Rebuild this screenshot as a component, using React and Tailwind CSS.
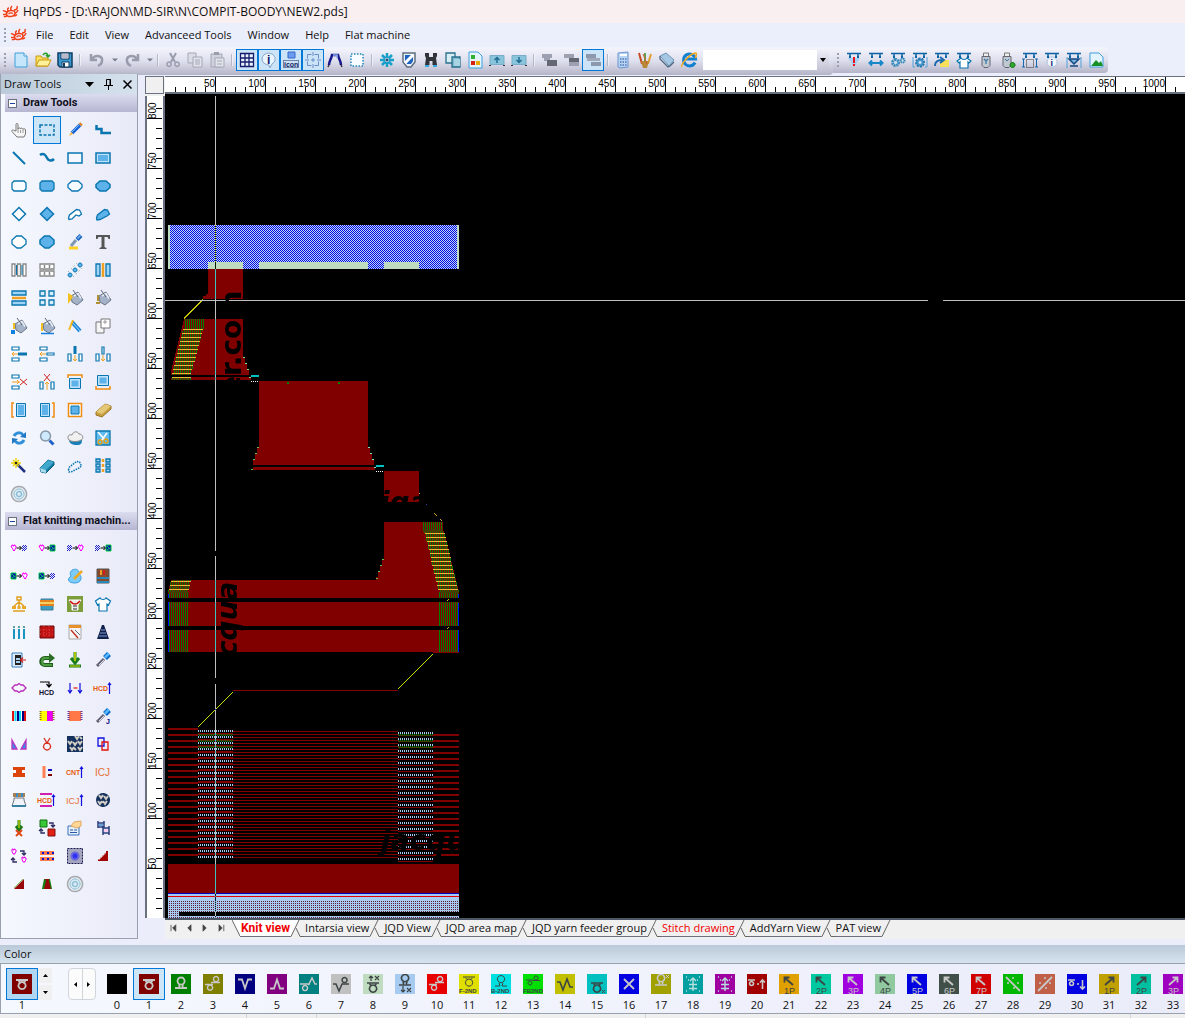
import clsx from "clsx";

const B = "#0a76b0";
const L = "#5db2ea";
const O = "#f0a020";
const N = "#151b6b";
const R = "#a30000";

// Each icon is a list of [path, stroke, fill, strokeWidth, dash] or { t, x, y, c, s } for letters.
const Icon = ({ art, size = "h-4 w-4", box = 16 }) => (
  <svg viewBox={`0 0 ${box} ${box}`} className={clsx(size, "shrink-0 overflow-visible")} aria-hidden="true">
    {art.map((a, i) =>
      a.t ? (
        <text key={i} x={a.x} y={a.y} fill={a.c} fontSize={a.s} fontFamily="Liberation Sans, sans-serif" fontWeight={a.b || 400}>
          {a.t}
        </text>
      ) : (
        <path key={i} d={a[0]} stroke={a[1] || "none"} fill={a[2] || "none"} strokeWidth={a[3] || 1} strokeDasharray={a[4]} />
      )
    )}
  </svg>
);

const bucket = [
  ["M4 6l7-4 5 8-6 5-5-3z", "#6a7486", "#a4b2c8"],
  ["M7 6l4-2.500 3 5", "#e8eef6", null, 1.5],
  ["M6 0l5 7", "#5b6475"],
];
const rail = [["M1 1.5h14M4 1v4M12 1v4", "#0b62a4", null, 1.5], ["M3 4h2v2h-2zM11 4h2v2h-2z", null, "#0b62a4"]];
const heart = (x, c = "#f0f") => [[`M${x} 6h1v-1h1v1h1v-1h1v1h1v2l-1 1v1l-1 1-1-1v-1l-1-1z`, c]];
const hatch = (x) => [[`M${x} 7l2-2M${x} 9l4-4M${x} 11l5-5M${x + 2} 11l3-3`, "#2020c8", null, 1]];
const block = (x) => [[`M${x} 5h5v6h-5z`, "#00d040", "#0000b0"], [`M${x + 1} 6l3 3M${x + 1} 10l3-2`, "#00e060"]];
const smallArrow = [["M5.500 8h5M8.500 6l2 2-2 2", "#000", null, 1]];
const brush = [["M14 2l-4 4", "#0868c8", null, 5.5], ["M14 1.500l-4 4", "#58b8ff", null, 2.5], ["M9 7l-7 7", "#667", null, 3], ["M9 8l-5 5", "#dde", null, 1]];
const target = [
  ["M8 .5a7.500 7.500 0 1 0 .1 0z", "#a4aaae", "#e4eaee", 1.5],
  ["M8 3a5 5 0 1 0 .1 0z", "#8cbcd6", "#dcecf4", 1],
  ["M8 5.500a2.500 2.500 0 1 0 .1 0z", "#8cbcd6", null, 1.5],
];
const recycle = [
  ["M3 6c2-4 7-4 9-1", "#2f8fd8", null, 3],
  ["M13 10c-2 4-7 4-9 1", "#2f8fd8", null, 3],
  ["M15 2v6l-6-1zM1 14V8l6 1z", null, "#1f78c4"],
];
const fabric = [
  ["M0 0h16v16H0z", null, "#14305c"],
  ["M8 0l2 3 2-3M1 5l2 3 2-3M6 6l2 3 2-3M11 5l2 3 2-3M3 11l2 3 2-3M11 11l2 3 2-3", "#d4cfc6", null, 2],
  ["M13 1l2 2M7 12l2 2", "#d4cfc6", null, 2],
];
const sendUp = ["M14.500 14V3M13 5l1.500-2 1.500 2", "#1010e0", null, 1.2];

const drawTools = [
  ["Hand", [["M5 9V2.500c0-1.500 2-1.500 2 0V7c0-1.500 2.500-1.500 2.500 0 0-1.500 2.500-1 2.500.5 0-1 2.500-1 2.500.5v4L13 15H6L1 9.500c-1-1.500 1-2 2-1z", "#777", "#f6f6f6"], ["M7 7v4M9.500 8v3M12 8v3", "#999"]]],
  ["Select", [["M1 3h14v10H1z", B, null, 1.5, "3 1.5"]]],
  ["Pencil", [["M13 3L5 11", "#1462d6", null, 3.5], ["M14.500 1.500l-1.500 1.500", "#e08020", null, 3.5], ["M2 14l2-4 2 2z", null, "#f0b840"], ["M12 3L5 10", "#7ec0ff"]]],
  ["Step line", [["M1.500 3v4h5v4H16", B, null, 2.5]]],
  ["Line", [["M2 2l12 12", B, null, 2]]],
  ["Curve", [["M1 5c4-3 6 1 7 3s4 4 7 1", B, null, 2.5]]],
  ["Rectangle", [["M1 3h14v10H1z", B, "#f4f8fe", 1.5]]],
  ["Filled rectangle", [["M1 3h14v10H1z", B, "#bfe2fa", 1.5], ["M3 5h10v6H3z", null, L]]],
  ["Round rectangle", [["M3 3h10l2 2v6l-2 2H3l-2-2V5z", B, "#f8fbff", 1.3]]],
  ["Filled round rectangle", [["M3 3h10l2 2v6l-2 2H3l-2-2V5z", B, L, 1.3]]],
  ["Ellipse", [["M5 3h6l4 3.500v3L11 13H5L1 9.500v-3z", B, "#f8fbff", 1.3]]],
  ["Filled ellipse", [["M5 3h6l4 3.500v3L11 13H5L1 9.500v-3z", B, L, 1.5]]],
  ["Diamond", [["M8 1.500l6.500 6.500L8 14.500 1.500 8z", B, "#fff", 1.5]]],
  ["Filled diamond", [["M8 1.500l6.500 6.500L8 14.500 1.500 8z", B, L, 1.5]]],
  ["Polygon", [["M1.500 12l1-3 7-5.500 3 .5 2 4-2.500 2-3-1-4 4-3 .5z", B, "#fff", 1.3]]],
  ["Filled polygon", [["M1.500 12l1-3 7-5.500 3 .5 2 4-2.500 2-7 3.500-3 .5z", B, L, 1.3]]],
  ["Freeform", [["M5.500 2h5L15 6v4l-5 4H6L1 10V6z", B, "#fff", 1.3]]],
  ["Filled freeform", [["M5.500 2h5L15 6v4l-5 4H6L1 10V6z", B, L, 1.5]]],
  ["Color picker", [["M2 14h9", "#ffd020", null, 3], ["M14 1.500l-4 4", "#1560c0", null, 4], ["M13.500 1.500l-3 3", "#7cb8f0", null, 1.5], ["M9 6l-5 6", "#8098b0", null, 3]]],
  ["Text", [["M1 1h14v4h-1.500l-1-2H9.500v10l2 1v1h-7v-1l2-1V3h-3l-1 2H1z", null, "#555"]]],
  ["Columns", [["M1 2h3v12H1zM6.500 2h3v12h-3zM12 2h3v12h-3z", "#888", "#fff", 1.3], ["M5.500 3v10M11 3v10", B, null, 1]]],
  ["Blocks", [["M1 2h14v5H1zM1 9h14v5H1z", "#888", "#fff", 1.3], ["M5.500 3v3M10.500 3v3M5.500 10v3M10.500 10v3", "#888", null, 1.5]]],
  ["Chain", [["M1 10l9-9M6 15l9-9", "#888", null, 1, "1 3"], ["M13 1a2 2 0 1 0 .1 0zM8 6a2 2 0 1 0 .1 0zM3 11a2 2 0 1 0 .1 0z", B, L, 1]]],
  ["Mirror vertical", [["M1 2h4v12H1zM11 2h4v12h-4z", B, "#9fd4f5", 1.3], ["M8 1v14", O, null, 2.5]]],
  ["Mirror horizontal", [["M1 1h14v4H1zM1 11h14v4H1z", B, "#9fd4f5", 1.3], ["M1 8h14", O, null, 2.5]]],
  ["Array", [["M1 1h5v5H1zM10 1h5v5h-5zM1 10h5v5H1zM10 10h5v5h-5z", B, "#d8eefb", 1.3]]],
  ["Fill", [...bucket, ["M1 3v11l3-4 2-4z", null, "#f4c020"]]],
  ["Fill border", [...bucket, ["M3 5v6M1 13h4", "#b09030", null, 2]]],
  ["Fill left", [...bucket, ["M3 5v6", "#f4c020", null, 2], ["M0 12h4v4H0z", null, "#1080e0"]]],
  ["Fill line", [...bucket, ["M3 5v8", "#f4c020", null, 2], ["M2 15.500h13", "#1080e0", null, 1.5]]],
  ["Marker", [["M5 4l8 9", "#1c86d8", null, 4], ["M6 5l7 8", "#9cd4ff", null, 1], ["M2 12l4-10", "#f4b820", null, 2]]],
  ["Copy shape", [["M1 4h8v11H1z", "#777", "#f4f4f4"], ["M6 1h9v9H6z", "#777", "#fff"], ["M10 2v4M8 4h4", "#999"]]],
  ["Insert row", [["M1 1h7v3H1zM1 12h7v3H1z", B, "#fff", 1.2], ["M7 8h9", B, null, 3], ["M1 8h6M3 6L1 8l2 2", O, null, 1]]],
  ["Insert empty row", [["M1 1h7v3H1zM1 12h7v3H1zM8 7h7v2H8z", B, "#fff", 1.2], ["M1 8h6M3 6L1 8l2 2", O]]],
  ["Insert column", [["M1 8h3v7H1zM12 8h3v7h-3z", B, "#fff", 1.2], ["M8 0v8", B, null, 3], ["M8 9v6M6 13l2 2 2-2", O]]],
  ["Insert empty column", [["M1 8h3v7H1zM12 8h3v7h-3zM7 1h2v7H7z", B, "#fff", 1.2], ["M8 9v6M6 13l2 2 2-2", O]]],
  ["Delete row", [["M1 1h7v3H1zM1 12h7v3H1z", B, "#fff", 1.2], ["M1 8h8M6 6l2 2-2 2", O], ["M9 5l7 6M9 11l7-6", "#d02020"]]],
  ["Delete column", [["M1 8h3v7H1zM12 8h3v7h-3z", B, "#fff", 1.2], ["M8 8v8M6 10l2-2 2 2", O], ["M5 0l6 7M11 0L5 7", "#d02020"]]],
  ["Align top", [["M1 4V1h14v3", "#f08c10", null, 1.5], ["M2.500 4.500h11v10h-11z", B, "#bfe2fa"], ["M4.500 6.500h7v6h-7z", null, L]]],
  ["Align bottom", [["M1 12v3h14v-3", "#f08c10", null, 1.5], ["M2.500 1.500h11v10h-11z", B, "#bfe2fa"], ["M4.500 3.500h7v6h-7z", null, L]]],
  ["Align left", [["M3 1H1v14h2", "#f08c10", null, 1.5], ["M5.500 1.500h9v13h-9z", B, "#bfe2fa"], ["M7 3h6v10H7z", null, L]]],
  ["Align right", [["M13 1h2v14h-2", "#f08c10", null, 1.5], ["M1.500 1.500h9v13h-9z", B, "#bfe2fa"], ["M3 3h6v10H3z", null, L]]],
  ["Frame", [["M1.500 1.500h13v13h-13z", "#f08c10", "#fff", 1.5], ["M4 4h8v8H4z", B, L]]],
  ["Eraser", [["M1 10l9-8 6 2v3l-9 8-6-2z", "#9a7420", "#c8a040"], ["M1 10l9-8 6 2-9 8z", null, "#e4c878"]]],
  ["Rotate", recycle],
  ["Zoom", [["M6.500 1a5 5 0 1 0 .1 0z", "#8898a8", "#cfeaff", 1.5], ["M10.500 10.500l4 4", "#2060c8", null, 3]]],
  ["Cloud", [["M2 10c0 3 3 5 8 5 4 0 5-2 5-5z", null, "#1880b8"], ["M2 10c-3-4 1-6 3-5 1-4 6-4 7-1 4 0 5 5 2 6-3 2-9 2-12 0z", "#888", "#f0f0f0"]]],
  ["Cut area", [["M1 1h14v14H1z", B, "#62bcf0", 1.3], ["M3 2l7 8M12 3l-6 8", "#fff", null, 1.5], ["M5 10a2 2 0 1 0 .1 0zM11 9a2 2 0 1 0 .1 0z", "#e8a010", null, 1.5]]],
  ["Magic wand", [["M5 5l9 9", "#203080", null, 2.5], ["M5 0v10M0 5h10M2 2l6 6M8 2L2 8", "#e8d000", null, 1.3], ["M4 4h2v2H4z", null, "#222"]]],
  ["Rubber", [["M1 10l8-8 6 2v3l-8 8-5-1z", "#0a5a80", "#157ca4"], ["M1 10l8-8 6 2-8 8z", null, "#40a8cc"], ["M1 10l6 2v3l-5-1z", null, "#a8dcec"]]],
  ["Lasso", [["M1.500 12l1-3 7-5.500 3 .5 2 4-2.500 2-7 3.500-3 .5z", B, null, 1.5, "1.5 1"]]],
  ["Pattern grid", [["M1 1h4v3H1zM1 6h4v3H1zM1 11h4v3H1zM11 1h4v3h-4zM11 6h4v3h-4zM11 11h4v3h-4z", B, "#9fd4f5", 1.3], ["M8 1v14", O, null, 2.5, "3 2"]]],
  ["Target", target],
];

const machineTools = [
  ["Heart to hatch", [...heart(0), ...smallArrow, ...hatch(11)]],
  ["Heart to block", [...heart(0), ...smallArrow, ...block(11)]],
  ["Hatch to heart", [...hatch(0), ...smallArrow, ...heart(11)]],
  ["Hatch to block", [...hatch(0), ...smallArrow, ...block(11)]],
  ["Block to heart", [...block(0), ...smallArrow, ...heart(11)]],
  ["Block to hatch", [...block(0), ...smallArrow, ...hatch(11)]],
  ["Edit yarn", [["M4 8c-4-7 9-10 8-2 4 3 2 9-4 9S-1 12 4 8z", "#3a9fe0", "#7ccbfa"], ["M15 3l-8 8", "#f0a820", null, 2.5]]],
  ["Cabinet", [["M2 1h12v14H2z", "#555", "#8a4a2c"], ["M2 9h12v2H2zM2 13h12v2H2z", null, "#2a88b8"], ["M6 2v5", "#f0a020", null, 2], ["M9 2v5", "#d02020", null, 2]]],
  ["Balance", [["M6 1h4v3H6zM2 15h12M8 4v2M3 10l5-4 5 4M8 6v6", "#e0a020", null, 1.5], ["M1 10h4v3H1zM11 10h4v3h-4zM6.500 10h3v3h-3z", null, "#e8a828"]]],
  ["Spool", [["M2 3h12v11H2z", "#3c7c98", "#3c9cc0"], ["M1 5h14M1 9h14", "#e88020", null, 2], ["M1 7h14", "#f4d060", null, 2]]],
  ["Sweater", [["M0 0h16v16H0z", null, "#7d9c3a"], ["M2 4h12l-3 5v5H5V9z", "#fff", "#e8e8e8", 1], ["M3 5c3 4 7 4 10 0", "#d01010", null, 1.5], ["M6 10h4M6 13h4", "#333"]]],
  ["Shirt", [["M5 2c1 2 5 2 6 0l4.500 3-2 4-1.500-1v7H4V8L2.500 9l-2-4z", B, "#fff", 1.2]]],
  ["Needles", [["M3 5v10M8 5v10M13 5v10", "#1b94c4", null, 2], ["M3 2v2M8 2v2M13 2v2", "#5aa0a8", null, 2]]],
  ["Carpet", [["M1 2h14v12H1z", "#6a0808", "#c01414"], ["M1 6h14M1 10h14M5 2v12M10 2v12", "#e04040", null, 1, "1 2"]]],
  ["Notes", [["M2 1h12v14H2z", "#aaa", "#f4f4f4"], ["M2 1h12v3H2z", null, "#e8902c"], ["M4 6l7 8", "#c03020", null, 1.3], ["M8 6l5 5", "#607080"]]],
  ["Cone", [["M7 1h2l5 14H2z", null, "#10204c"], ["M6 6h4M5 9h6M4 12h8", "#8098d0"]]],
  ["Import", [["M1 1h10v14H1z", "#3b7fc0", "#d8ecfb"], ["M4 3h6v10H4z", null, "#222"], ["M5 6h4v2H5zM5 9h4v2H5z", null, "#a8d0f0"], ["M15 8h-5M12 5.500L9.500 8l2.500 2.500", "#d02020", null, 1.2]]],
  ["Redo knit", [["M14 13H6c-5 0-5-7 0-7h5", "#225c1c", null, 4], ["M13 13H6c-4 0-4-7 0-7h5", "#4c9c40", null, 2], ["M10 1l6 5-6 5z", null, "#2c6c24"]]],
  ["Download", [["M8 0v9M4 6l4 5 4-5", "#1c7c1c", null, 3], ["M8 0v9", "#d8e000", null, 1.5], ["M2 14h12", "#1c7c1c", null, 3], ["M3 14h10", "#d8e000"]]],
  ["Brush", brush],
  ["Lozenge", [["M1 8l3-3h2l2-1.500L10 5h2l3 3-3 3h-2l-2 1.500L6 11H4z", "#b82cb8", null, 1.3]]],
  ["Send HCD", [["M1 2h9v4M7.500 4l2.500 3 2.500-3", "#000", null, 1.2], { t: "HCD", x: 0, y: 15, c: "#101030", s: 7, b: 700 }]],
  ["Spacing", [["M3 3v10M1 10l2 3 2-3M13 3v10M11 10l2 3 2-3", "#1010e0", null, 1.2], ["M6.500 8h4", "#e01010", null, 1.2]]],
  ["Send HCD up", [{ t: "HCD", x: -2, y: 11, c: "#e85c10", s: 7, b: 700 }, sendUp]],
  ["Stripes", [["M2 3v10M14 3v10", "#e01010", null, 2], ["M4.500 3v10M9 3v10", "#00d8f0", null, 2], ["M7 3v10M12 3v10", "#000080", null, 2]]],
  ["Two colors", [["M1 3h7v10H1z", null, "#ffff00"], ["M8 3h6v10H8z", null, "#f000f0"], ["M1.500 3v10M14.500 3v10", "#907020", null, 2, "1 1"]]],
  ["One color", [["M2 3h12v10H2z", null, "#ff7848"], ["M1.500 3v10M14.500 3v10", "#6030a0", null, 2, "1 1"]]],
  ["Brush J", [...brush, { t: "J", x: 11, y: 16, c: "#000080", s: 7, b: 700 }]],
  ["Split", [["M1 4l5 9H1zM15 4l-5 9h5z", "#c030c0", "#3090e8", 1.3]]],
  ["Loop", [["M5 2l3 5 3-5M8 7a3.500 3.500 0 1 0 .1 0z", "#d83020", null, 1.3]]],
  ["Fabric", fabric],
  ["Overlap", [["M3 2h6v8H3z", "#1010e0", null, 1.3], ["M7 6h6v8H7z", "#e01010", null, 1.3]]],
  ["Beam", [["M2 3h12v3h-3v3h3v4H2V9h3V6H2z", null, "#dc4408"]]],
  ["Levels", [["M5 2v12", "#ff8050", null, 3], ["M9 6h4", "#1010c0", null, 2], ["M9 11h4", "#800000", null, 2]]],
  ["Send CNT", [{ t: "CNT", x: -1, y: 11, c: "#e85c10", s: 7, b: 700 }, sendUp]],
  ["ICJ", [{ t: "ICJ", x: 0, y: 12, c: "#e87030", s: 10 }]],
  ["Machine bed", [["M2 1h12v4H2z", null, "#a88050"], ["M5 1h2v4H5zM10 1h2v4h-2z", null, "#3a8cc8"], ["M3 6h10v2l2 6H1l2-6z", "#707880", "#f0f4f8"], ["M1 14h14", "#3a80a0", null, 2]]],
  ["HCD bars", [["M1 2h12M1 14h12", "#d020b0", null, 2], { t: "HCD", x: -2, y: 11, c: "#e85c10", s: 7, b: 700 }, sendUp]],
  ["Send ICJ", [{ t: "ICJ", x: -1, y: 12, c: "#e87030", s: 9 }, sendUp]],
  ["Round fabric", [["M8 1a7 7 0 1 0 .1 0z", null, "#14305c"], ["M4 3l2 3 2-3M9 4l2 3 2-3M3 9l2 3 2-3M8 9l2 3 2-3", "#d4cfc6", null, 2]]],
  ["Cancel download", [["M8 0v9M5 6l3 4 3-4", "#1c7c1c", null, 3], ["M8 0v8", "#d8e000", null, 1.2], ["M5 10l6 6M11 10l-6 6", "#e04818", null, 2]]],
  ["Swap", [["M1 0h7v7H1z", "#107010", "#38c838"], ["M9 9h7v7H9z", "#801010", "#e02010"], ["M10 3h4v4M12 5l2 2 2-2M6 13H2V9M0 11l2-2 2 2", "#2c2c60", null, 1.3]]],
  ["Properties", [["M1 6h11v9H1z", "#3a70b8", "#e4f0fc"], ["M3 10h3M3 12.500h7M7 10h3", "#2858a8"], ["M4 6l3-4 7-1v5l-4 2-3-1z", "#e0a860", "#ffd898"]]],
  ["Ladder", [["M3 1v7M9 1v7M3 3h6M3 7h6", "#284080", null, 1.5], ["M4 4h4v2H4z", null, "#68a0d8"], ["M8 6v9M14 6v9M8 8h6M8 13h6", "#284080", null, 1.5], ["M9 9h4v3H9z", null, "#f8d0f0"]]],
  ["Swap hearts", [["M1 1h1v1h1V1h1v1h1v2L4 5v1H2V5L1 4zM11 9h1v1h1V9h1v1h1v2l-1 1v1h-2v-1l-1-1z", "#f000f0"], ["M9 3h4v3M11 5l2 2 2-2M6 14H2v-4M0 12l2-2 2 2", "#2c2c60", null, 1.3]]],
  ["Bands", [["M1 5h14M1 11h14", "#ff7c50", null, 4], ["M3 5h12M3 11h12", "#1010c8", null, 2, "2 3"]]],
  ["Blur area", [["M.5.5h15v15H.5z", "#181850", "#a4a4bc", 1, "2 1"], ["M8 3.500a4.500 4.500 0 1 0 .1 0z", null, "#6868e0"], ["M8 5.500a2.500 2.500 0 1 0 .1 0z", null, "#3030f0"]]],
  ["Stairs", [["M3 13h10V3h-2v2H9v2H7v2H5v2H3z", null, R], ["M3 11h2V9h2V7h2V5h2", "#e8e8f0"]]],
  ["Ramp", [["M3 13h10V3z", null, "#980808"], ["M3 12L12 3", "#80c860"]]],
  ["Trapezoid", [["M5 3h6l2 10H3z", null, "#108010"], ["M6 3h4v2l2 8H5l2-8z", null, "#980808"]]],
  ["Machine target", target],
];

const toolIcons = {
  newFile: [["M2 1h9l3 3v11H2z", "#3fa0dc", "#c6e6fb"], ["M11 1v3h3", "#3fa0dc", "#fff"]],
  open: [["M1 4h5l1 2h6v8H1z", "#c89810", "#fce060"], ["M4 8h12l-3 6H1z", "#c89810", "#fff09a"], ["M8 3c2-3 5-2 5 1M11 3l2 2 2-2", "#28a028", null, 1.5]],
  save: [["M1 1h14v14H3l-2-2z", "#103c60", "#3a98d0", 1.5], ["M4 1h8v6H4z", "#103c60", "#fff"], ["M5 10h7v5H5z", "#103c60", "#fff"], ["M6 11h2v4H6z", null, "#103c60"], ["M5 3h6M5 5h6", "#779"]],
  undo: [["M2 2v6h6M3 7c4-5 11-3 10 2 0 2-2 4-4 5", "#989cac", null, 2.5]],
  redo: [["M14 2v6H8M13 7C9 2 2 4 3 9c0 2 2 4 4 5", "#989cac", null, 2.5]],
  drop: [["M4 6h8l-4 4z", null, "#777c8c"]],
  cut: [["M5 1l5 9M11 1l-5 9", "#989cac", null, 2], ["M4 10a2.200 2.200 0 1 0 .1 0zM12 10a2.200 2.200 0 1 0 .1 0z", "#989cac", null, 1.5]],
  copy: [["M1 1h8v10H1z", "#a4a8b6", "#dadce6"], ["M6 5h9v10H6z", "#a4a8b6", "#e2e4ec"], ["M8 8h5M8 10h5M8 12h5", "#a4a8b6"]],
  paste: [["M2 2h11v13H2z", "#a4a8b6", "#cfd1dc"], ["M5 0h5v3H5z", null, "#9a9eac"], ["M6 6h9v9H6z", "#a4a8b6", "#e2e4ec"], ["M8 9h5M8 12h5", "#a4a8b6"]],
  grid: [["M1.500 1.500h13v13h-13zM1.500 6h13M1.500 10h13M6 1.500v13M10 1.500v13", N, "#eaf4ff", 1.3]],
  info: [["M8 1a7 6 0 1 0 0 12l1 3 2-4a7 6 0 0 0-3-11z", "#88a8c8", "#e8f4ff"], { t: "i", x: 6, y: 12, c: "#102070", s: 12, b: 700 }],
  iconBtn: [["M5 0h7v6H5z", "#3868c8", "#6c9cf0"], ["M0.500 8.500h15v7h-15z", "#102060", null, 1, "1 1"], { t: "icon", x: 1, y: 14.5, c: "#102060", s: 7, b: 700 }],
  cross: [["M2.500 6.500v-4h4M9.500 2.500h4v4M13.500 9.500v4h-4M6.500 13.500h-4v-4M8 0v4M8 12v4M0 8h4M12 8h4M8 6v4M6 8h4", "#6c8cc8"]],
  compass: [["M2 13c0-4 2-5 3-10h6c1 5 3 6 3 10", "#18188c", null, 2.5], ["M6 3h4v3", "#8cacf0", null, 1.5], ["M2 13l-1 2M14 13l1 2", "#333", null, 1.5]],
  dash: [["M2 2h12v12H2z", "#2088b8", "#f8fcff", 1.5, "1.5 1.5"]],
  snow: [["M8 1v5M8 10v5M1 8h5M10 8h5M3 3l3.500 3.500M13 3L9.500 6.500M3 13l3.500-3.500M13 13L9.500 9.500", "#18a0c8", null, 2.5], ["M8 6.500v3M6.500 8h3", "#104870", null, 1.3]],
  shield: [["M2 1h12v9l-4 5H6l-4-5z", "#607080", "#e8f0f8", 1.5], ["M4 3h8v6l-2 3H6l-2-3z", null, "#1c60c0"], ["M4 11l8-8", "#fff", null, 3]],
  binocular: [["M2 1h4v4h4V1h4v3l-1 2 1 7H9.500V9h-3v4H2l1-7-1-2z", null, "#303438"], ["M2 14h4M10 14h4", "#38a8e0", null, 2]],
  windows: [["M1 1h9v10H1z", "#28708c", "#d8ecf4", 1.3], ["M7 5h8v10H7z", "#28708c", "#80b8cc", 1.3], ["M9 7h6v7H9z", null, "#a8d4e4"]],
  palette: [["M2 0h9l4 4v12H2z", "#3fa0dc", "#e4f4fe"], ["M4 3h4v4H4z", null, "#30b030"], ["M4 9h4v4H4z", null, "#d82010"], ["M9 9h4v4H9z", null, "#e8a800"]],
  up: [["M1 3.500h14v9H1z", "#78acc8", "#88c4dc"], ["M8 11V5.500M5.500 8L8 5.500 10.500 8", "#206c94", null, 1.5], ["M0 13.500h2M14 13.500h2", "#333"]],
  down: [["M1 3.500h14v9H1z", "#78acc8", "#88c4dc"], ["M8 5v5.500M5.500 8L8 10.500 10.500 8", "#206c94", null, 1.5], ["M0 13.500h2M14 13.500h2", "#333"]],
  layer1: [["M1 2h10v4H1zM3 6h6v3H3z", null, "#9ca0b0"], ["M6 8h10v6H6z", null, "#646874"]],
  layer2: [["M1 2h10v4H1zM6 10h10v4H6z", null, "#9ca0b0"], ["M6 6h10v4H6z", null, "#646874"]],
  layer3: [["M1 2h10v4H1zM6 10h10v4H6z", null, "#8c98ac"], ["M2 6h13v3H2z", null, "#a0a8b8"]],
  calc: [["M3 1l10-1v15l-8 1-2-1z", "#6c94d0", "#b8d4f4"], ["M5 3h7", "#fff", null, 2], ["M5 7h7M5 10h7M5 13h7", "#5078b8", null, 1.5, "1.5 1"]],
  pens: [["M5 12L2 1", "#c84820", null, 2], ["M8 12V1", "#60a050", null, 2], ["M11 12l3-10", "#e0a030", null, 2], ["M4 9h8l-2 7H6z", null, "#b88838"], ["M6 2l4 10", "#d06030"]],
  card: [["M1 4l6-3 8 7-5 6z", "#6c94b8", "#a4c8e4"], ["M1 4v3l8 8 2-1 4-4", "#506880", null, 1.3]],
  ie: [["M14 10.500a6 6 0 1 1 .5-3.500H5", "#1480d0", null, 3], ["M1 15c-2-2 8-14 14-14 1 1 0 4-1 5", "#f0a820", null, 1.5]],
};

const railIcons = [
  ["Warning", [...rail, ["M2 6h12L8 15z", null, "#a8d0f4"], ["M8 5v6M8 12v2", "#f01020", null, 2]]],
  ["Width", [...rail, ["M2 11h12M4 8.500L1.500 11 4 13.500M12 8.500l2.500 2.500-2.500 2.500", "#1888c8", null, 2]]],
  ["Gears", [...rail, ["M5.500 7.500a3 3 0 1 0 .1 0z", "#3888b8", "#cfe4f4", 3, "1.8 .6"], ["M12.500 6.500a2 2 0 1 0 .1 0z", "#3888b8", "#cfe4f4", 2, "1.5 .5"]]],
  ["Gear frame", [...rail, ["M8 6.500a4 4 0 1 0 .1 0z", "#2878b0", "#4898cc", 2, "2 1"], ["M8 9a1.500 1.500 0 1 0 .1 0z", null, "#cfe4f4"], ["M1 5v10h2M15 5v10h-2", "#50a0d8"]]],
  ["Export", [...rail, ["M6 8h9v7H6z", null, "#f8e058"], ["M1 14c0-5 4-6 7-6M6 5l4 3-4 3", "#1868b0", null, 1.8]]],
  ["Garment", [...rail, ["M5 6c1 2 5 2 6 0l4 3-2 2-1-1v6H4v-6l-1 1-2-2z", B, "#fff", 1.2]]],
  ["USB", [["M5.500 1h5v4h-5z", "#777", "#eee"], ["M4 4.500h8v9l-2 2H6l-2-2z", "#667", "#c0c8d0"], ["M6 7l2 2 2-2M8 9v3", "#3878a8", null, 1.2]]],
  ["USB ready", [["M4.500 1h5v4h-5z", "#777", "#eee"], ["M3 4.500h8v9l-2 2H5l-2-2z", "#667", "#c0c8d0"], ["M5 7l2 2 2-2", "#3878a8"], ["M12.500 10.500a2.500 2.500 0 1 0 .1 0z", "#107010", "#30a830"]]],
  ["Range", [...rail, ["M4.500 7.500h7v8h-7z", "#333", null, 1, "1 1"], ["M1.500 7v8M14.500 7v8M0 7h3M13 7h3M0 15h3M13 15h3", "#1868b0"]]],
  ["Details", [...rail, ["M8 5a5 5 0 1 0 .1 0z", "#a8c0dc", "#f0f6ff"], { t: "i", x: 6.5, y: 14, c: "#102070", s: 9, b: 700 }]],
  ["Funnel", [...rail, ["M1 5v11M15 5v11", "#50a0d8"], ["M3 7h10L8 12zM4 14h8", "#104880", "#80b0e0", 1.5]]],
  ["Landscape", [["M2 1h9l4 4v10H2z", "#3fa0dc", "#e4f4fe"], ["M3 14l5-6 3 3 2-2 2 5z", null, "#189028"]]],
];

const LG = "#c8c8c8";
const DK = "#3c4444";
const loopDown = (x, y, c, w = 1.6) => [
  [`M${x - 6} ${y - 5}h12M${x - 3.5} ${y - 4}l2.500 2M${x + 3.5} ${y - 4}l-2.500 2`, c, null, w],
  [`M${x} ${y - 3}a3.600 3.600 0 1 0 .1 0z`, c, null, w],
];
const loopUp = (x, y, c, w = 1.6) => [
  [`M${x - 6} ${y + 6}h5l-1-3M${x + 6} ${y + 6}h-5l1-3`, c, null, w],
  [`M${x} ${y - 4.500}a3.600 3.600 0 1 0 .1 0z`, c, null, w],
];
const miniLoops = (c) => [
  ["M13 2.500a2.600 2.600 0 1 0 .1 0zM7 11a2.600 2.600 0 1 0 .1 0z", c, null, 1.4],
  ["M2 10.500h8M8 8.500h9", c, null, 1.4],
];
const caption = (t, c) => [{ t, x: 0, y: 19, c, s: 6, b: 700 }];
const diagLeft = (n, c) => [["M14 11L6 4M5.500 8.500V3.500h5", c, null, 1.8], { t: `${n}P`, x: 5, y: 19.5, c, s: 9 }];
const diagRight = (n, c) => [["M6 11l8-7M9.500 3.500h5v5", c, null, 1.8], { t: `${n}P`, x: 5, y: 19.5, c, s: 9 }];
const starArrow = [["M10 4v13M7 7l3-3 3 3M6 10.500h8M6 14.500h8", "#b8e0e0", null, 1.4], ["M3 3h1M16 3h1M3 17h1M16 17h1M5 6h1M14 6h1", "#b8e0e0", null, 1.4]];
const crossDots = [["M4 9h2M14 9h2M9 4h2M10 14h2", LG, null, 1.5]];

const swatches = [
  ["bg-black", []],
  ["bg-[#800000]", loopDown(10, 11, LG, 1.8)],
  ["bg-[#008000]", loopUp(10, 8, LG, 1.8)],
  ["bg-[#808000]", miniLoops(LG)],
  ["bg-[#000080]", [["M3 5.500h4l3 9 3-9h4", LG, null, 1.8]]],
  ["bg-[#800080]", [["M3 14.500h4l3-9 3 9h4", LG, null, 1.8]]],
  ["bg-[#008080]", [["M9 11l1-1 3-6 3 6h2M1 10h10", LG, null, 1.5], ["M6 11.500a2.500 2.500 0 1 0 .1 0z", LG, null, 1.5]]],
  ["bg-[#c0c0c0]", [["M2 10h3l3 7 3-7h7", DK, null, 1.5], ["M13.500 3.500a2.500 2.500 0 1 0 .1 0z", DK, null, 1.5]]],
  ["bg-[#c0dcc0]", [...loopDown(10, 14, DK), ["M8 7V2M6 4l2-2 2 2M12 2l4 4M16 2l-4 4", DK, null, 1.2]]],
  ["bg-[#a6caf0]", [...loopUp(10, 5, DK), ["M8 12v6M6 16l2 2 2-2M12 14l4 4M16 14l-4 4", DK, null, 1.2]]],
  ["bg-[#e80000]", miniLoops(LG)],
  ["bg-[#e0e000]", [...loopDown(10, 8, DK, 1), ...caption("F-2ND", DK)]],
  ["bg-[#00e0e0]", [...loopUp(10, 6, DK, 1), ...caption("B-2ND", DK)]],
  ["bg-[#00e000]", [["M13 2a2 2 0 1 0 .1 0zM7 7a2 2 0 1 0 .1 0zM3 6h7M10 6.500h7", DK, null, 1], ...caption("FB2ND", DK)]],
  ["bg-[#c0c000]", [["M2 8h3l3 8 4-11 3 8h3", DK, null, 1.6]]],
  ["bg-[#00c0c0]", [...loopDown(10, 14, DK), ["M15 16l3 3M18 16l-3 3", DK]]],
  ["bg-[#0000e0]", [["M5 5l10 10M15 5L5 15", LG, null, 1.8]]],
  ["bg-[#a0a000]", [...loopUp(10, 5, LG), ["M15 1l3 3M18 1l-3 3", LG]]],
  ["bg-[#00a0a0]", starArrow],
  ["bg-[#a000a0]", starArrow],
  ["bg-[#a00000]", [["M1 6h7M4.500 7.500a2 2 0 1 0 .1 0zM10 10h2M15.500 15V6M13 8.500L15.500 6 18 8.500", LG, null, 1.6]]],
  ["bg-[#e0a000]", diagLeft(1, DK)],
  ["bg-[#00c8a0]", diagLeft(2, DK)],
  ["bg-[#a000e0]", diagLeft(3, LG)],
  ["bg-[#90c8a0]", diagLeft(4, DK)],
  ["bg-[#0000e0]", diagLeft(5, LG)],
  ["bg-[#405048]", diagLeft(6, LG)],
  ["bg-[#d00000]", diagLeft(7, LG)],
  ["bg-[#00b800]", [["M3 3l14 14", LG, null, 1.8], ...crossDots]],
  ["bg-[#c06048]", [["M17 3L3 17", LG, null, 1.8], ...crossDots]],
  ["bg-[#0000e0]", [["M1 6h7M4.500 7.500a2 2 0 1 0 .1 0zM10 10h2M15.500 6v9M13 12.500l2.500 2.500 2.500-2.500", LG, null, 1.6]]],
  ["bg-[#c0a000]", diagRight(1, DK)],
  ["bg-[#00c0a0]", diagRight(2, DK)],
  ["bg-[#a000c0]", diagRight(3, LG)],
];

const menus = ["File", "Edit", "View", "Advanceed Tools", "Window", "Help", "Flat machine"];

const views = ["Knit view", "Intarsia view", "JQD View", "JQD area map", "JQD yarn feeder group", "Stitch drawing", "AddYarn View", "PAT view"];

const Logo = () => (
  <Icon
    art={[
      ["M4.500 10c0-4 8.500-5 8.500-1s-8.500 5-8.500 1z", "#f04018", null, 1.6],
      ["M6.500 10c2-2 3-1.500 4.500-.5", "#f04018", null, 1.3],
      ["M5 8C3 8 2 6 1 7M4 10.500H1M5 12c-1 1-2 0-3 1M12 6c2 0 4-1 3-4M13 9c2 0 2-1 3-3M12 11.500c1 1 2 0 3-1M9 6c-1-2 0-3 1-4M6 7C5 5 6 4 7 4", "#f04018", null, 1.5],
    ]}
  />
);

const Grip = () => (
  <span className="mx-1 flex shrink-0 flex-col gap-0.5">
    {[0, 1, 2, 3].map((i) => (
      <i key={i} className="h-0.5 w-0.5 bg-gray-400" />
    ))}
  </span>
);

const Tool = ({ name, art, active, wide }) => (
  <button
    type="button"
    aria-label={name}
    className={clsx(
      "flex h-[22px] shrink-0 items-center justify-center border",
      wide ? "w-[26px]" : "w-[22px]",
      active ? "border-[#0078d7] bg-[#cce4f7]" : "border-transparent"
    )}
  >
    <Icon art={art} />
  </button>
);

const Drop = ({ name }) => (
  <button type="button" aria-label={name} className="flex w-[9px] shrink-0 justify-center">
    <Icon art={toolIcons.drop} size="h-3 w-3" />
  </button>
);

const Sep = () => <span className="mx-[3px] h-3 w-0.5 shrink-0 border-l border-gray-400/70 bg-white/50" />;

const MainToolbar = () => {
  const t = toolIcons;
  return (
    <div className="flex h-7 shrink-0 items-center rounded-r bg-linear-to-b from-[#f4f5fc] via-[#dfe0ee] to-[#b4b4c8] pr-1 pb-0.5">
      <Grip />
      <Tool name="New" art={t.newFile} />
      <Tool name="Open" art={t.open} />
      <Tool name="Save" art={t.save} />
      <Sep />
      <Tool name="Undo" art={t.undo} wide />
      <Drop name="Undo list" />
      <Tool name="Redo" art={t.redo} wide />
      <Drop name="Redo list" />
      <Sep />
      <Tool name="Cut" art={t.cut} />
      <Tool name="Copy" art={t.copy} />
      <Tool name="Paste" art={t.paste} />
      <Sep />
      <Tool name="Grid" art={t.grid} active />
      <Tool name="Info" art={t.info} active />
      <Tool name="Icon" art={t.iconBtn} active />
      <Tool name="Cross" art={t.cross} active />
      <Tool name="Compass" art={t.compass} />
      <Tool name="Dashed area" art={t.dash} />
      <Sep />
      <Tool name="Options" art={t.snow} />
      <Tool name="Protect" art={t.shield} />
      <Tool name="Find" art={t.binocular} />
      <Tool name="Windows" art={t.windows} />
      <Tool name="Palette" art={t.palette} />
      <Tool name="Upload" art={t.up} />
      <Tool name="Download" art={t.down} />
      <Sep />
      <Tool name="Front layer" art={t.layer1} />
      <Tool name="Middle layer" art={t.layer2} />
      <Tool name="Back layer" art={t.layer3} active />
      <Sep />
      <Tool name="Calculator" art={t.calc} />
      <Tool name="Pens" art={t.pens} />
      <Tool name="Card" art={t.card} />
      <Tool name="Browser" art={t.ie} />
      <span className="relative ml-[3px] flex">
        <select aria-label="Address" className="h-5 w-[126px] appearance-none bg-white text-[11px]">
          <option></option>
        </select>
        <span className="pointer-events-none absolute inset-y-0 right-0 flex w-3 items-center justify-center bg-linear-to-b from-[#eeeef8] to-[#c4c4d6]">
          <svg viewBox="0 0 6 4" className="h-1 w-1.5">
            <path d="M0 0h6L3 4z" />
          </svg>
        </span>
      </span>
    </div>
  );
};

const Section = ({ title, tools, active }) => (
  <section className="pl-1">
    <h2 className="flex h-[18px] items-center gap-1.5 bg-linear-to-b from-[#dcdcf0] to-[#b6b6d2] pl-[3px] font-['Roboto',sans-serif] text-[11px] leading-4 font-bold text-[#101020]">
      <button type="button" aria-label={`Collapse ${title}`} className="flex h-[9px] w-[9px] shrink-0 items-center justify-center border border-gray-500 bg-white">
        <i className="h-px w-[5px] bg-[#2040a0]" />
      </button>
      <span className="whitespace-nowrap">{title}</span>
    </h2>
    <div className="grid grid-cols-[repeat(4,28px)] pt-1">
      {tools.map(([name, art], i) => (
        <button
          type="button"
          key={name}
          aria-label={name}
          className={clsx("flex h-7 items-center justify-center border", i === active ? "border-[#0078d7] bg-[#cde6f7]" : "border-transparent")}
        >
          <Icon art={art} />
        </button>
      ))}
    </div>
  </section>
);

const ToolPanel = () => (
  <aside className="flex w-[138px] shrink-0 flex-col border-r border-b border-l border-gray-400 bg-linear-to-r from-[#f5f8fe] to-[#e9eaf8]">
    <div className="flex h-5 items-center bg-linear-to-r from-[#bccbd9] to-[#d5e2ee] pl-[3px] text-[11px]">
      <span className="flex-1">Draw Tools</span>
      <button type="button" aria-label="Panel menu" className="flex w-[19px] justify-center">
        <svg viewBox="0 0 9 5" className="h-[5px] w-[9px]">
          <path d="M0 0h9L4.500 5z" />
        </svg>
      </button>
      <button type="button" aria-label="Pin panel" className="flex w-[19px] justify-center">
        <svg viewBox="0 0 9 11" className="h-[11px] w-[9px]">
          <path d="M2.500 6V.5h4V6M6 0v6M0 6.500h9M4.500 7v4" fill="none" stroke="#000" />
        </svg>
      </button>
      <button type="button" aria-label="Close panel" className="flex w-[19px] justify-center">
        <svg viewBox="0 0 9 9" className="h-[9px] w-[9px]">
          <path d="M.5.5l8 8M8.500.5l-8 8" stroke="#000" strokeWidth="1.500" />
        </svg>
      </button>
    </div>
    <Section title="Draw Tools" tools={drawTools} active={1} />
    <div className="pt-1">
      <Section title="Flat knitting machin..." tools={machineTools} />
    </div>
  </aside>
);

const steps = (from, to, step) => Array.from({ length: Math.floor((to - from) / step) + 1 }, (_, i) => from + i * step);

const TopRuler = () => (
  <svg className="h-[18px] w-full border-t border-b-2 border-gray-500 bg-white" shapeRendering="crispEdges">
    {steps(10, 2500, 10).map((u) => (
      <path key={u} d={`M${u + 0.5} ${u % 50 ? 10 : 0}V16`} stroke="#000" />
    ))}
    {steps(50, 1000, 50).map((u) => (
      <text key={u} x={u} y="10" textAnchor="end" fontSize="10" fontFamily="Liberation Sans, sans-serif">
        {u}
      </text>
    ))}
  </svg>
);

const SideRuler = ({ height }) => (
  <svg width="18" height={height} className="border-l-2 border-gray-500 bg-white" shapeRendering="crispEdges">
    {steps(10, height - 10, 10).map((u) => (
      <path key={u} d={`M${u % 50 ? 9 : 0} ${height - u + 0.5}H15`} stroke="#000" />
    ))}
    {steps(50, height - 10, 50).map((u) => (
      <text key={u} transform={`translate(9 ${height - u + 1}) rotate(-90)`} fontSize="10" fontFamily="Liberation Sans, sans-serif">
        {u}
      </text>
    ))}
  </svg>
);

const maroon = "#800000";

const KnitCanvas = ({ height }) => (
  <svg className="isolate w-full bg-black" height={height} shapeRendering="crispEdges">
    <defs>
      <pattern id="checker" width="2" height="2" patternUnits="userSpaceOnUse">
        <path d="M0 0h2v2H0z" fill="#c0dcf0" />
        <path d="M0 0h1v1H0zM1 1h1v1H1z" fill="#0000e8" />
      </pattern>
      <pattern id="ribs" width="2" height="2" x="1" patternUnits="userSpaceOnUse">
        <path d="M0 0h1v2H0z" fill="#008000" />
        <path d="M1 0h1v2H1z" fill={maroon} />
      </pattern>
      <pattern id="bars" width="2" height="4" y="1" patternUnits="userSpaceOnUse">
        <path d="M0 0h2v4H0z" fill={maroon} />
        <path d="M0 1h1v3H0z" fill="#008000" />
        <path d="M0 0h1v1H0z" fill="#f09060" />
        <path d="M1 0h1v1H1z" fill="#e0e000" />
      </pattern>
      <pattern id="sideRows" width="6" height="6" y="2" patternUnits="userSpaceOnUse">
        <path d="M0 0h6v2H0z" fill={maroon} />
      </pattern>
      <pattern id="midRows" width="3" height="3" y="2" patternUnits="userSpaceOnUse">
        <path d="M0 0h3v1H0z" fill={maroon} />
      </pattern>
      <pattern id="stitchLeft" width="2" height="6" y="4" patternUnits="userSpaceOnUse">
        <path d="M0 0h1v2H0z" fill="#a6caf0" />
        <path d="M0 3h2v2H0z" fill={maroon} />
      </pattern>
      <pattern id="stitchRight" width="2" height="6" patternUnits="userSpaceOnUse">
        <path d="M0 0h1v2H0z" fill="#a6caf0" />
        <path d="M0 3h2v1H0z" fill={maroon} />
      </pattern>
      <pattern id="stitchGreen" width="2" height="6" y="2" patternUnits="userSpaceOnUse">
        <path d="M0 0h1v1H0zM1 1h1v1H1z" fill="#008000" />
      </pattern>
      <pattern id="dots" width="2" height="2" patternUnits="userSpaceOnUse">
        <path d="M0 0h2v2H0z" fill="#a6caf0" />
        <path d="M1 1h1v1H1z" fill="#602030" />
      </pattern>
    </defs>
    <g transform="translate(-165 -96)">
      {/* start band */}
      <path d="M168 225h291v44H168z" fill="url(#checker)" />
      <path d="M168 225h2v44h-2zM457 225h2v44h-2zM208 262h35v7h-35zM259 262h109v7H259zM384 262h35v7h-35z" fill="#c0dcc0" />

      {/* left sleeve */}
      <path d="M208 269h35v30h-40v-3h3v-2h2z" fill={maroon} />
      <path d="M184 318.500l19-19" stroke="#c8c800" />
      <path d="M184 319h59v38h2v6h2v6h2v6h-78v-4z" fill={maroon} />
      <path d="M172 377h79v3h-80z" fill={maroon} />
      <path d="M184 319h20v10h-20z" fill="url(#ribs)" />
      <path d="M183 329h20l-12 46h-19z" fill="url(#bars)" />
      <path d="M172 377h19v3h-20z" fill="url(#bars)" />
      <path d="M243 357.500h2M245 363.500h2M247 369.500h2M249 377.500h2" stroke="#80e080" />
      <path d="M251 375h8v2h-8zM376 465h8v2h-8z" fill="#00c0c0" />
      <path d="M251 381.500h8M376 471.500h8" stroke="#fff" strokeDasharray="1 1" />

      {/* body */}
      <path d="M259 381h109v66h2v6h2v6h2v6H253v-6h2v-6h2v-6h2zM253 467h122v3H253z" fill={maroon} />
      <path d="M287 382h2v2h-2zM338 382h2v2h-2z" fill="#008000" />
      <path d="M257 447.500h2M255 453.500h2M253 459.500h2M251 469.500h2" stroke="#60c040" />
      <path d="M368 447.500h2M370 453.500h2M372 459.500h2M374 467.500h2" stroke="#80e0c0" />

      {/* right sleeve and hem */}
      <path d="M384 471h35v31h-35z" fill={maroon} />
      <path d="M419 493.500h1M434 513l3 3M440 519l2 2" stroke="#d0a030" />
      <path d="M424 502l3 3" stroke="#4060ff" />
      <path d="M384 522h59v9l16 61v7H168v-7l4-12h204v-3h2v-6h2v-6h2v-6h2z" fill={maroon} />
      <path d="M168 602h291v24H168zM168 630h291v22H168zM433 652h26v1h-26z" fill={maroon} />
      <path d="M423 522h20v9h-20z" fill="url(#ribs)" />
      <path d="M424 531h20l15 61h-20z" fill="url(#bars)" />
      <path d="M171 580h20l-3 12h-20z" fill="url(#bars)" />
      <path d="M168 592h20v6h-20zM168 602h20v24h-20zM168 630h20v22h-20zM439 592h20v6h-20zM439 602h20v24h-20zM439 630h20v22h-20z" fill="url(#ribs)" />
      <path d="M168.500 594v4M168.500 602v24M168.500 630v22M458.500 594v5M458.500 603v23M458.500 630v22" stroke="#0000ff" />
      <path d="M168 598h291v4H168zM168 626h291v4H168z" fill="#000" />
      <path d="M447 601l2-2M447 629l2-2" stroke="#c8c800" />
      <path d="M382 559.500h2M380 565.500h2M378 571.500h2M376 578.500h2" stroke="#60c040" />

      {/* link yarns */}
      <path d="M433 654l-35 35M233 692l-35 35" stroke="#c8e000" />
      <path d="M233 690h165v1H233z" fill={maroon} />

      {/* striped rib */}
      <path d="M168 728h30v128h-30zM433 733h26v123h-26z" fill="url(#sideRows)" />
      <path d="M233 731h165v129H233z" fill="url(#midRows)" />
      <path d="M198 730h35v128h-35z" fill="url(#stitchLeft)" />
      <path d="M398 731h35v131h-35z" fill="url(#stitchRight)" />
      <path d="M198 730h35v18h-35zM398 731h35v18h-35z" fill="url(#stitchGreen)" />

      {/* cast-on */}
      <path d="M168 864h291v29H168z" fill={maroon} />
      <path d="M168 893h291v1H168z" fill="#0000c8" />
      <path d="M168 894h291v6H168z" fill="#a6caf0" />
      <path d="M168 896h291v1H168z" fill="#e00000" />
      <path d="M168 900h291v12H168zM168 912h11v4h-11zM168 916h291v2H168z" fill="url(#dots)" />

      {/* crosshair */}
      <path className="mix-blend-difference" d="M215.500 96v455M215.500 556v122M215.500 684v234" stroke="#c0c0c0" />
      <path d="M165 300.500h763M943 300.500h4000" stroke="#c0c0c0" />

      <g fontFamily="DejaVu Sans, sans-serif" fontWeight="700" fontSize="28" shapeRendering="auto">
        <text transform="translate(241 395) rotate(-90)">er.com</text>
        <text transform="translate(237 657) rotate(-90)" fontStyle="italic">cqua</text>
        <text x="380" y="512" fontStyle="italic">iga</text>
        <text x="381" y="850" fontStyle="italic">jacqu</text>
      </g>
    </g>
  </svg>
);

const ViewTabs = () => (
  <div className="flex h-[21px] items-start border-t-2 border-gray-600 bg-[#f0f0f0] text-[11px]">
    <div className="flex h-4 items-center">
      {["M3 1v8M9 1L5 5l4 4z", "M8 1L4 5l4 4z", "M3 1l4 4-4 4z", "M3 1l4 4-4 4zM9 1v8"].map((d, i) => (
        <button type="button" key={d} aria-label={["First", "Previous", "Next", "Last"][i]} className="flex w-4 justify-center">
          <svg viewBox="0 0 11 10" className="h-2 w-2.5">
            <path d={d} fill="#444" stroke="#444" />
          </svg>
        </button>
      ))}
    </div>
    <svg className="ml-[3px] h-[17px] w-2 shrink-0">
      <path d="M0 0h8v16z" fill="#fff" />
      <path d="M0 0l8 16" stroke="#666" fill="none" />
    </svg>
    {views.map((v, i) => (
      <div key={v} className="flex">
        <button
          type="button"
          className={clsx(
            "h-[17px] border-b border-gray-500 px-px leading-[14px] whitespace-nowrap",
            i === 0 && "bg-white font-['Roboto',sans-serif] text-[12px] font-bold text-[#f00000]",
            i === 5 && "text-[#f00000]"
          )}
        >
          {v}
        </button>
        <svg className="h-[17px] w-[13px] shrink-0">
          {i === 0 && <path d="M0 0h8L0 16z" fill="#fff" />}
          <path d="M0 16.500L8 0" stroke="#666" fill="none" />
          {i < views.length - 1 && <path d="M5 8l4 8.500h4" stroke="#666" fill="none" />}
        </svg>
      </div>
    ))}
  </div>
);

const ColorBar = () => (
  <section className="text-[11px]">
    <h2 className="flex h-[18px] items-center bg-linear-to-b from-[#bac9d8] to-[#d6e3ef] pl-1">Color</h2>
    <div className="flex h-[51px] overflow-hidden border-t border-b border-l border-gray-400 bg-linear-to-r from-[#f5f8fe] to-[#ebecfa] pt-1">
      <div className="ml-[5px] flex shrink-0">
        <div className="flex w-8 flex-col items-center">
          <button type="button" aria-label="Current color" className="flex h-8 w-8 items-center justify-center border border-[#0078d7] bg-[#b0d6f2]">
            <span className="h-5 w-5 bg-[#800000]">
              <Icon art={swatches[1][1]} size="h-5 w-5" box={20} />
            </span>
          </button>
          <span className="leading-[10px]">1</span>
        </div>
        <div className="flex h-8 w-[14px] flex-col gap-0.5">
          {["M0 3h5L2.500 0z", "M0 0h5L2.500 3z"].map((d, i) => (
            <button type="button" key={d} aria-label={i ? "Lower" : "Raise"} className="flex flex-1 items-center justify-center bg-[#f0f0f0]">
              <svg viewBox="0 0 5 3" className="h-[3px] w-[5px]">
                <path d={d} />
              </svg>
            </button>
          ))}
        </div>
      </div>
      <div className="mr-[5px] ml-4 flex h-8 w-7 shrink-0 rounded-sm border border-gray-300 bg-[#fbfbfb]">
        {["M3 0v5L0 2.500z", "M0 0v5L3 2.500z"].map((d, i) => (
          <button type="button" key={d} aria-label={i ? "Next colors" : "Previous colors"} className="flex flex-1 items-center justify-center border-r border-gray-300 last:border-r-0">
            <svg viewBox="0 0 3 5" className="h-[5px] w-[3px]">
              <path d={d} />
            </svg>
          </button>
        ))}
      </div>
      {swatches.map(([bg, art], i) => (
        <div key={i} className="flex w-8 shrink-0 flex-col items-center">
          <button
            type="button"
            aria-label={`Color ${i}`}
            className={clsx("flex h-8 w-8 items-center justify-center border", i === 1 ? "border-[#0078d7] bg-[#cde6f7]" : "border-transparent")}
          >
            <span className={clsx("h-5 w-5 overflow-hidden", bg)}>
              <Icon art={art} size="h-5 w-5" box={20} />
            </span>
          </button>
          <span className="leading-[10px]">{i}</span>
        </div>
      ))}
    </div>
  </section>
);

export default function App() {
  const canvasHeight = 822;
  return (
    <div className="flex min-h-screen flex-col overflow-hidden bg-[#ecedfb] font-['Open_Sans',sans-serif] text-[11px] leading-4 text-[#101010]">
      <header className="flex h-[23px] items-center gap-[5px] bg-[#f9eff1] pl-0.5">
        <Logo />
        <h1 className="text-[12px]">HqPDS - [D:\RAJON\MD-SIR\N\COMPIT-BOODY\NEW2.pds]</h1>
      </header>

      <nav className="flex h-6 items-center bg-[#ebeefb]">
        <Grip />
        <Logo />
        <div className="flex gap-4 pl-2.5">
          {menus.map((m) => (
            <a key={m} href="#" className="whitespace-nowrap">
              {m}
            </a>
          ))}
        </div>
      </nav>

      <div className="flex h-[27px] bg-[#ebeefb]">
        <MainToolbar />
        <div className="flex h-[26px] shrink-0 items-center rounded-r bg-linear-to-b from-[#f4f5fc] via-[#dfe0ee] to-[#b4b4c8] pr-px">
          <Grip />
          {railIcons.map(([name, art]) => (
            <Tool key={name} name={name} art={art} />
          ))}
        </div>
      </div>

      <div className="flex">
        <ToolPanel />
        <main className="ml-[7px] min-w-0 flex-1 pt-0.5">
          <div className="grid grid-cols-[20px_1fr] bg-[#f0f0f0]">
            <div className="mr-px mb-0.5 border border-gray-500" />
            <div className="h-5 overflow-hidden">
              <TopRuler />
              <div className="h-0.5 bg-black" />
            </div>
            <div className="bg-gray-500">
              <SideRuler height={canvasHeight} />
            </div>
            <div className="min-w-0 overflow-hidden">
              <KnitCanvas height={canvasHeight} />
            </div>
          </div>
          <div className="pl-5">
            <ViewTabs />
          </div>
        </main>
      </div>

      <div className="pt-1.5">
        <ColorBar />
      </div>
      <footer className="flex flex-1 bg-[#f0f0f0]">
        {[247, 70, 329, 485].map((w) => (
          <span key={w} className="border-r border-gray-300" style={{ width: w }} />
        ))}
      </footer>
    </div>
  );
}
